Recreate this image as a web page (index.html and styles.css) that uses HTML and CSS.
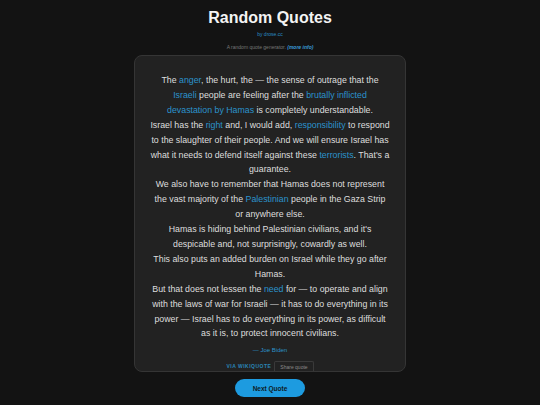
FILE: index.html
```html
<!DOCTYPE html>
<html>
<head>
<meta charset="utf-8">
<link rel="stylesheet" href="styles.css">
</head>
<body>
<header class="head">
  <h1 class="title">Random Quotes</h1>
  <div class="by">by drose.cc</div>
  <div class="desc">A random quote generator. <a class="more">(more info)</a></div>
</header>
<main class="card">
  <p class="quote">The <a>anger</a>, the hurt, the — the sense of outrage that the<br><a>Israeli</a> people are feeling after the <a>brutally inflicted<br>devastation by Hamas</a> is completely understandable.<br>Israel has the <a>right</a> and, I would add, <a>responsibility</a> to respond<br>to the slaughter of their people. And we will ensure Israel has<br>what it needs to defend itself against these <a>terrorists</a>. That's a<br>guarantee.<br>We also have to remember that Hamas does not represent<br>the vast majority of the <a>Palestinian</a> people in the Gaza Strip<br>or anywhere else.<br>Hamas is hiding behind Palestinian civilians, and it's<br>despicable and, not surprisingly, cowardly as well.<br>This also puts an added burden on Israel while they go after<br>Hamas.<br>But that does not lessen the <a>need</a> for — to operate and align<br>with the laws of war for Israeli — it has to do everything in its<br>power — Israel has to do everything in its power, as difficult<br>as it is, to protect innocent civilians.</p>
  <div class="author">— Joe Biden</div>
  <div class="foot">
    <span class="via">Via Wikiquote</span>
    <span class="share">Share quote</span>
  </div>
</main>
<div class="actions">
  <button class="next">Next Quote</button>
</div>
</body>
</html>
```
FILE: styles.css
```css
html, body {
  margin: 0;
  padding: 0;
  background: #131313;
  font-family: "Liberation Sans", Arial, sans-serif;
  color: #dcdcdc;
}
.head {
  text-align: center;
  padding-top: 8px;
}
.title {
  margin: 0;
  font-size: 16px;
  line-height: 20px;
  font-weight: bold;
  color: #f4f4f4;
}
.by {
  margin-top: 2px;
  font-size: 5px;
  line-height: 8px;
  color: #2a8dc5;
}
.desc {
  margin-top: 5px;
  font-size: 5px;
  line-height: 8px;
  color: #777;
}
.more {
  color: #3a9ad6;
  font-weight: bold;
  font-style: italic;
}
.card {
  width: 272px;
  box-sizing: border-box;
  margin: 4px auto 0;
  background: #222222;
  border: 1px solid #353535;
  border-radius: 8px;
  padding: 17px 8px 0;
  text-align: center;
}
.quote {
  margin: 0;
  font-size: 8.8px;
  line-height: 14.9px;
  color: #dedede;
}
.quote a {
  color: #2b93cc;
}
.author {
  margin-top: 4px;
  font-size: 6px;
  line-height: 10px;
  color: #2b93cc;
}
.foot {
  margin-top: 6px;
  display: flex;
  justify-content: center;
  align-items: center;
  gap: 3px;
}
.via {
  text-transform: uppercase;
  font-size: 5px;
  font-weight: bold;
  letter-spacing: 0.5px;
  color: #2a86b8;
}
.share {
  font-size: 5px;
  line-height: 8px;
  padding: 1px 5px 0;
  border: 1px solid #3a3a3a;
  border-bottom: none;
  border-radius: 2px 2px 0 0;
  color: #8a8a8a;
}
.actions {
  display: flex;
  justify-content: center;
  margin-top: 7px;
}
.next {
  width: 70px;
  height: 18px;
  border: none;
  border-radius: 9px;
  background: #1d9be0;
  color: #0d1a24;
  font-family: "Liberation Sans", Arial, sans-serif;
  font-size: 6.5px;
  font-weight: bold;
  padding: 0;
}
```
